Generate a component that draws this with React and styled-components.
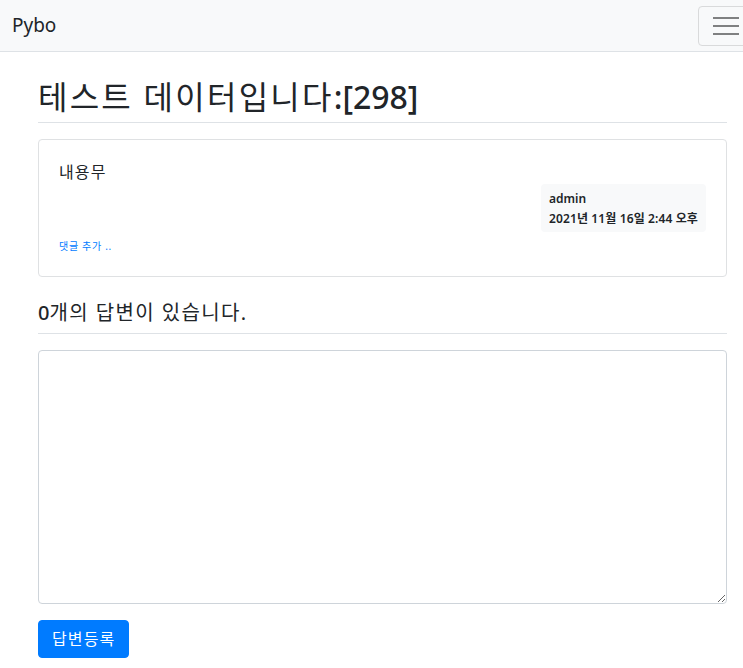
import React from "react";
import styled, { createGlobalStyle } from "styled-components";

const GlobalStyle = createGlobalStyle`
  html, body {
    margin: 0;
    padding: 0;
    overflow-x: hidden;
    background: #fff;
  }
  body {
    font-family: "Segoe UI", "Noto Sans", "Noto Sans CJK KR", sans-serif;
    color: #212529;
    font-size: 16px;
    line-height: 1.5;
  }
  * {
    box-sizing: border-box;
  }
`;

// hangul glyphs in the reference run a little wider than Noto CJK
const Hangul = styled.span`
  letter-spacing: ${(p) => p.$spacing || "0.07em"};
`;

const NavBar = styled.nav`
  display: flex;
  align-items: center;
  justify-content: space-between;
  height: 52px;
  padding: 0 0 0 12px;
  background: #f8f9fa;
  border-bottom: 1px solid #dee2e6;
`;

const Brand = styled.a`
  font-size: 19px;
  color: #212529;
  text-decoration: none;
  line-height: 1;
`;

const Toggler = styled.button`
  display: flex;
  flex-direction: column;
  justify-content: center;
  gap: 6px;
  width: 56px;
  height: 40px;
  margin-right: -11px;
  padding: 0 14px;
  background: transparent;
  border: 1px solid #d9dadb;
  border-radius: 4px;

  span {
    display: block;
    height: 2px;
    width: 26px;
    background: #7f8081;
  }
`;

const Container = styled.main`
  padding: 18px 16px 20px 38px;
`;

const Title = styled.h2`
  margin: 0 0 16px;
  padding: 8px 0 6px;
  font-size: 32px;
  font-weight: 400;
  line-height: 1.2;
  border-bottom: 1px solid #dee2e6;

  b {
    font-weight: 500;
  }
`;

const Card = styled.section`
  border: 1px solid #dfe1e3;
  border-radius: 4px;
  padding: 20px 20px 20px;
  margin-bottom: 24px;
`;

const CardText = styled.div`
  font-size: 16px;
  line-height: 24px;
`;

const MetaRow = styled.div`
  display: flex;
  justify-content: flex-end;
`;

const Meta = styled.div`
  background: #f8f9fa;
  border-radius: 4px;
  padding: 5px 8px 3px;
  font-size: 12px;
  font-weight: 600;
  line-height: 20px;
`;

const CommentLink = styled.a`
  display: inline-block;
  margin-top: 4px;
  font-size: 10px;
  color: #007bff;
  text-decoration: none;
`;

const AnswerCount = styled.h5`
  margin: 0 0 16px;
  padding-bottom: 8px;
  font-size: 20px;
  font-weight: 400;
  line-height: 1.2;
  border-bottom: 1px solid #dee2e6;

  b {
    font-weight: 500;
  }
`;

const TextArea = styled.textarea`
  display: block;
  width: 100%;
  height: 254px;
  padding: 6px 12px;
  font-size: 16px;
  border: 1px solid #ced4da;
  border-radius: 4px;
  resize: vertical;
  font-family: inherit;
`;

const SubmitButton = styled.button`
  margin-top: 16px;
  padding: 6px 13px;
  font-family: inherit;
  font-size: 16px;
  line-height: 24px;
  color: #fff;
  background: #007bff;
  border: 1px solid #007bff;
  border-radius: 4px;
`;

const App = () => {
  return (
    <>
      <GlobalStyle />
      <NavBar>
        <Brand href="#">Pybo</Brand>
        <Toggler aria-label="menu">
          <span />
          <span />
          <span />
        </Toggler>
      </NavBar>
      <Container>
        <Title>
          <Hangul>테스트 데이터입니다</Hangul>
          <b>:[298]</b>
        </Title>
        <Card>
          <CardText>
            <Hangul>내용무</Hangul>
          </CardText>
          <MetaRow>
            <Meta>
              <div>admin</div>
              <Hangul $spacing="0.01em">2021년 11월 16일 2:44 오후</Hangul>
            </Meta>
          </MetaRow>
          <CommentLink href="#">
            <Hangul>댓글 추가 ..</Hangul>
          </CommentLink>
        </Card>
        <AnswerCount>
          <b>0</b>
          <Hangul>개의 답변이 있습니다.</Hangul>
        </AnswerCount>
        <TextArea />
        <SubmitButton>
          <Hangul>답변등록</Hangul>
        </SubmitButton>
      </Container>
    </>
  );
};

export default App;
